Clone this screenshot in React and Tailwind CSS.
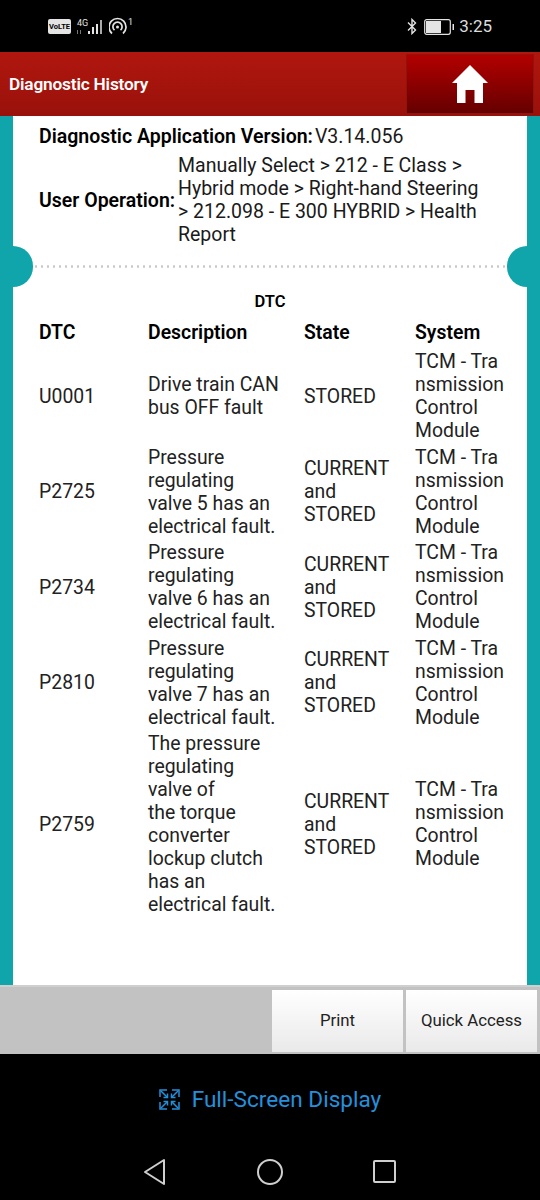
import React from "react"

const tcm = ["TCM - Tra", "nsmission", "Control", "Module"]

const rows = [
  { code: "U0001", desc: ["Drive train CAN", "bus OFF fault"], state: ["STORED"] },
  { code: "P2725", desc: ["Pressure", "regulating", "valve 5 has an", "electrical fault."], state: ["CURRENT", "and", "STORED"] },
  { code: "P2734", desc: ["Pressure", "regulating", "valve 6 has an", "electrical fault."], state: ["CURRENT", "and", "STORED"] },
  { code: "P2810", desc: ["Pressure", "regulating", "valve 7 has an", "electrical fault."], state: ["CURRENT", "and", "STORED"] },
  {
    code: "P2759",
    desc: ["The pressure", "regulating", "valve of", "the torque", "converter", "lockup clutch", "has an", "electrical fault."],
    state: ["CURRENT", "and", "STORED"],
  },
]

const Lines = ({ items }) => (
  <div>
    {items.map((line, i) => (
      <div key={i} className="whitespace-nowrap">{line}</div>
    ))}
  </div>
)

const StatusBar = () => (
  <div className="h-[52px] bg-black flex items-center justify-between px-[48px] pt-[1px]">
    <div className="flex items-center gap-[5px]">
      <div className="w-[23px] h-[15px] bg-[#e4e4e4] rounded-[2px] flex items-center justify-center text-[7.500px] font-bold text-black leading-none">VoLTE</div>
      <svg width="30" height="20" viewBox="0 0 30 20" fill="#e4e4e4">
        <text x="1" y="9" fontSize="9" fontFamily="Roboto, sans-serif">4G</text>
        <rect x="1" y="13" width="1" height="4" fill="#777" />
        <rect x="4" y="13" width="1" height="4" fill="#777" />
        <rect x="12" y="14" width="2" height="3" />
        <rect x="16" y="10" width="2" height="7" />
        <rect x="20" y="7" width="2" height="10" />
        <rect x="24" y="3" width="2" height="14" fill="#aaa" />
      </svg>
      <svg className="-ml-[2px]" width="26" height="20" viewBox="0 0 26 20" fill="none" stroke="#e4e4e4" strokeWidth="1.700">
        <path d="M3 16.500a8.500 8.500 0 1 1 11 0" />
        <path d="M5.500 13.200a4.600 4.600 0 1 1 6 0" />
        <circle cx="8.500" cy="10" r="1.500" fill="#e4e4e4" stroke="none" />
        <text x="19" y="8" fontSize="9" fill="#e4e4e4" stroke="none" fontFamily="Roboto, sans-serif">1</text>
      </svg>
    </div>
    <div className="flex items-center text-[#dcdcdc] text-[17px]">
      <svg width="10" height="17" viewBox="0 0 10 17" fill="none" stroke="#e4e4e4" strokeWidth="1.400">
        <path d="M1 4.500 8.500 12 5 15.500v-14L8.500 5 1 12.500" />
      </svg>
      <svg className="ml-[7px]" width="30" height="16" viewBox="0 0 30 16" fill="none">
        <rect x="0.700" y="0.700" width="25.600" height="14.600" rx="2" stroke="#e4e4e4" strokeWidth="1.200" />
        <rect x="2" y="2" width="15" height="12" fill="#e4e4e4" />
        <rect x="28.500" y="5" width="1.500" height="6" fill="#e4e4e4" />
      </svg>
      <span className="ml-[5px]">3:25</span>
    </div>
  </div>
)

const Header = () => (
  <div className="h-[64px] flex items-center justify-between bg-[linear-gradient(180deg,#b0170e,#99110b)] pl-[9px] pr-[6px]">
    <span className="text-white font-semibold text-[17.300px] tracking-[-0.2px] pt-[2px]">Diagnostic History</span>
    <div className="w-[128px] h-[60px] mb-[1px] flex items-center justify-center bg-[linear-gradient(180deg,#b30000,#650000)] border border-[#8f1410]">
      <svg width="36" height="38" viewBox="0 0 36 38" fill="white">
        <path d="M18 0 0 18h5v20h8.500V25h9v13H31V18h5z" />
      </svg>
    </div>
  </div>
)

const SummaryBlock = () => (
  <div className="pl-[26px] pt-[9px] text-[#1a1a1a] text-[19.500px] leading-[23px]">
    <div className="flex items-center h-[23px]">
      <span className="font-semibold text-black whitespace-nowrap">Diagnostic Application Version:</span>
      <span className="ml-[2px]">V3.14.056</span>
    </div>
    <div className="flex items-center mt-[6px]">
      <span className="w-[139px] font-semibold text-black whitespace-nowrap">User Operation:</span>
      <div className="whitespace-nowrap">
        <div>Manually Select &gt; 212 - E Class &gt;</div>
        <div>Hybrid mode &gt; Right-hand Steering</div>
        <div>&gt; 212.098 - E 300 HYBRID &gt; Health</div>
        <div>Report</div>
      </div>
    </div>
  </div>
)

const Divider = () => (
  <div className="relative h-[41px] flex items-center">
    <div className="absolute left-0 w-[20px] h-[41px] rounded-r-full bg-[#0fa5ab]" />
    <div className="absolute right-0 w-[20px] h-[41px] rounded-l-full bg-[#0fa5ab]" />
    <div className="w-full mx-[20px] h-[3px] bg-[radial-gradient(circle,#c8c8c8_1px,transparent_1.400px)] bg-[length:6px_3px]" />
  </div>
)

const DtcTable = () => (
  <div className="pl-[26px] text-[19.400px] leading-[23px] text-[#222]">
    <div className="text-center font-semibold text-black text-[16.500px] leading-[20px] mt-[5px] pr-[26px]">DTC</div>
    <div className="grid grid-cols-[109px_156px_111px_1fr] mt-[9px] h-[25px] font-semibold text-black">
      <span>DTC</span>
      <span>Description</span>
      <span>State</span>
      <span>System</span>
    </div>
    <div className="flex flex-col gap-[3.500px] mt-[4px]">
      {rows.map(row => (
        <div key={row.code} className="grid grid-cols-[109px_156px_111px_1fr] items-center">
          <span>{row.code}</span>
          <Lines items={row.desc} />
          <Lines items={row.state} />
          <Lines items={tcm} />
        </div>
      ))}
    </div>
  </div>
)

const BottomBar = () => (
  <div className="h-[69px] bg-[#c2c2c2] flex justify-end items-center gap-[3px] pr-[3px] border-t-[2px] border-[#cfcfcf] text-[#222] text-[16.800px]">
    <button className="w-[131px] h-[62px] bg-[linear-gradient(180deg,#ffffff,#e9e9e9)]">Print</button>
    <button className="w-[131px] h-[62px] bg-[linear-gradient(180deg,#ffffff,#e9e9e9)]">Quick Access</button>
  </div>
)

const NavBar = () => (
  <div className="bg-black h-[146px] flex flex-col">
    <div className="h-[90px] pt-[1px] flex items-center justify-center gap-[12px] text-[#2490dc] text-[22.600px]">
      <svg width="21" height="21" viewBox="0 0 21 21" fill="none" stroke="#2490dc" strokeWidth="1.500">
        <path d="M8 1H1v7M13 1h7v7M8 20H1v-7M13 20h7v-7" />
        <path d="M2 2l6 6M19 2l-6 6M2 19l6-6M19 19l-6-6" />
        <path d="M4.500 8.500h4v-4M16.500 8.500h-4v-4M4.500 12.500h4v4M16.500 12.500h-4v4" />
      </svg>
      <span>Full-Screen Display</span>
    </div>
    <div className="relative flex-1">
      <svg className="absolute left-[143px] top-[14px]" width="24" height="28" viewBox="0 0 24 28" fill="none" stroke="#cfcfcf" strokeWidth="2" strokeLinejoin="round">
        <path d="M21 2v24L2 14z" />
      </svg>
      <div className="absolute left-[257px] top-[15px] w-[26px] h-[26px] rounded-full border-[2px] border-[#cfcfcf]" />
      <div className="absolute left-[373px] top-[16px] w-[23px] h-[23px] rounded-[2px] border-[2px] border-[#cfcfcf]" />
    </div>
  </div>
)

export default function App() {
  return (
    <div className="w-[540px] h-[1200px] flex flex-col overflow-hidden bg-black font-['Roboto',sans-serif]">
      <StatusBar />
      <Header />
      <div className="h-[869px] bg-white border-x-[13px] border-[#0fa5ab]">
        <SummaryBlock />
        <Divider />
        <DtcTable />
      </div>
      <BottomBar />
      <NavBar />
    </div>
  )
}
